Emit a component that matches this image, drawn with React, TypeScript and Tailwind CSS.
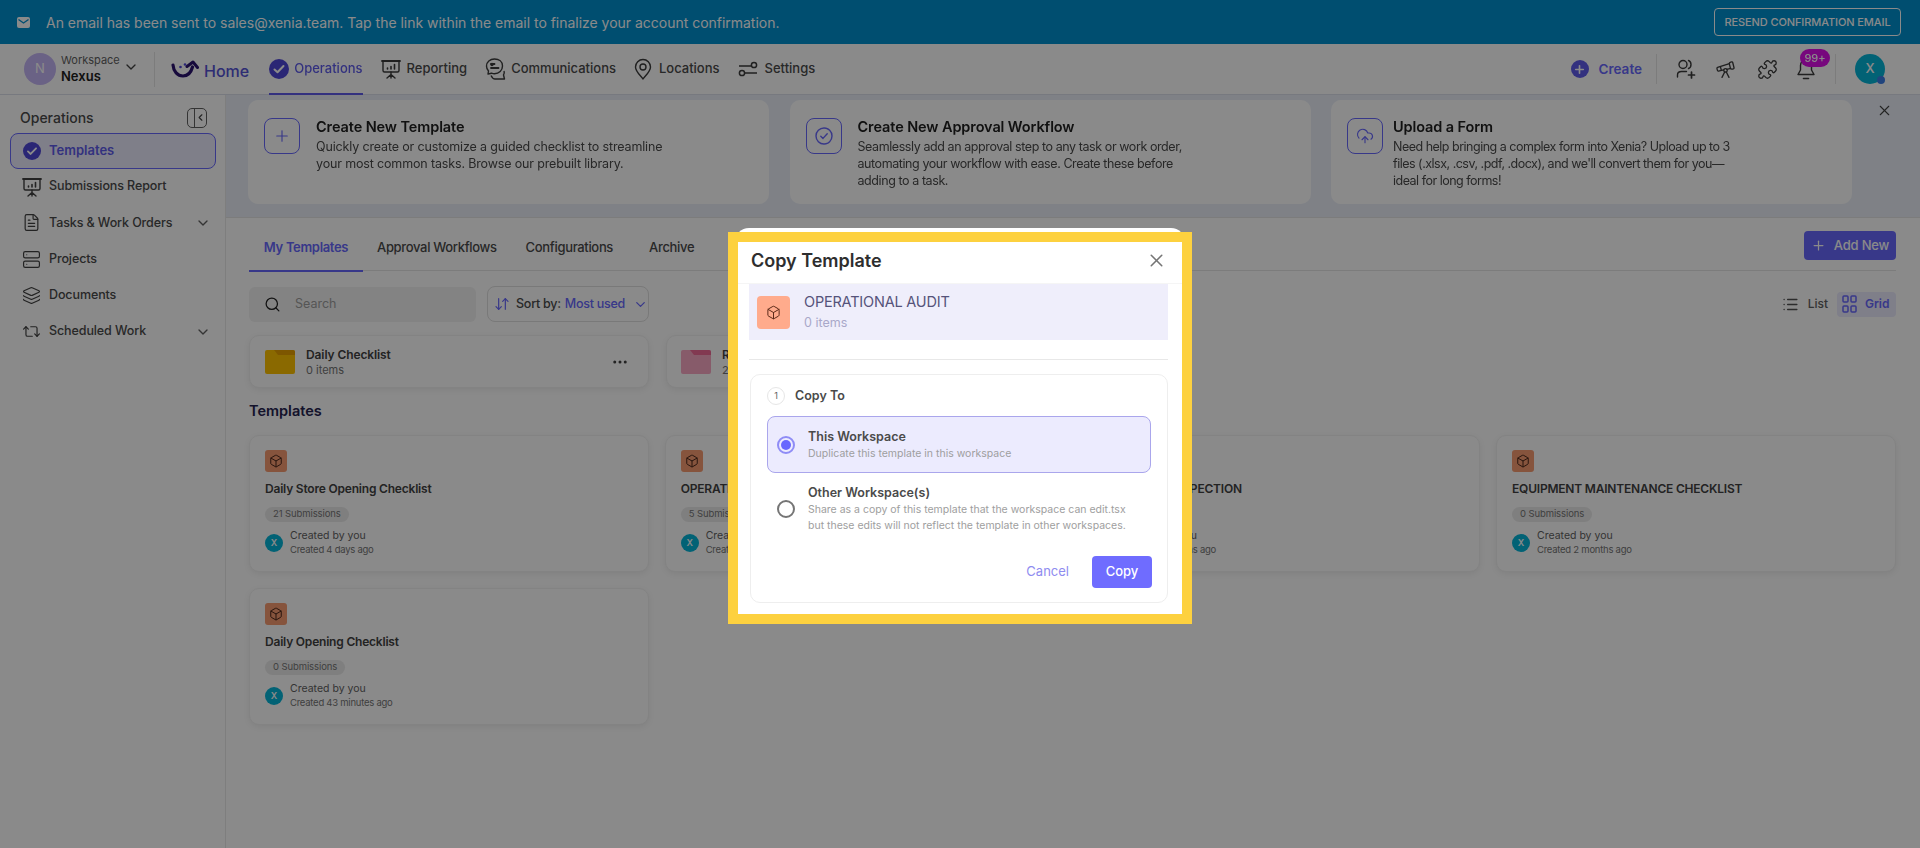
import {
  ArrowDownUp,
  Box,
  ChevronDown,
  ChevronLeft,
  CloudUpload,
  Ellipsis,
  FileText,
  Layers,
  List,
  Plus,
  Puzzle,
  Repeat2,
  Search,
  Server,
  Telescope,
  X,
} from "lucide-react";

function CheckBadge({ size = 20 }: { size?: number }) {
  return (
    <svg width={size} height={size} viewBox="0 0 20 20" className="shrink-0">
      <circle cx="10" cy="10" r="10" fill="#4f46d8" />
      <path d="M5.5 10.5l3 2.8 6-6.3" fill="none" stroke="#fff" strokeWidth="2" strokeLinecap="round" strokeLinejoin="round" />
    </svg>
  );
}

function Logo() {
  return (
    <svg width="28" height="18" viewBox="0 0 28 18" fill="none" className="shrink-0">
      <path d="M2 5c.5 6.500 4.500 11 10 11 5 0 8-3.500 9.500-9" stroke="#2c1470" strokeWidth="3.200" strokeLinecap="round" />
      <path d="M16 6.500L22 2l4.500 5.500" stroke="#2c1470" strokeWidth="3" strokeLinecap="round" strokeLinejoin="round" />
      <circle cx="9.500" cy="7" r="1.300" fill="#4f46d8" />
      <circle cx="14" cy="4.500" r="1.300" fill="#4f46d8" />
    </svg>
  );
}

function ReportIcon({ color = "#3b3b3b" }: { color?: string }) {
  return (
    <svg width="20" height="20" viewBox="0 0 20 20" fill="none" stroke={color} strokeWidth="1.400" strokeLinecap="round" className="shrink-0">
      <path d="M1 2h18" strokeWidth="1.800" />
      <path d="M2 2v9.500A1.500 1.500 0 0 0 3.500 13h13a1.500 1.500 0 0 0 1.500-1.500V2" />
      <path d="M6.500 10V9M10 10V7.500M13.500 10V5.500" strokeWidth="1.600" />
      <path d="M10 13v2.500M10 15.500L6 19M10 15.500l4 3.500M10 15.500V19" />
    </svg>
  );
}

function CommsIcon() {
  return (
    <svg width="22" height="22" viewBox="0 0 22 22" fill="none" stroke="#3b3b3b" strokeWidth="1.400" strokeLinejoin="round" className="shrink-0">
      <path d="M9.500 1C5 1 1.500 4 1.500 8c0 2.200.8 3.800 2 5l-.5 3 3.500-.8c1 .4 2 .6 3 .6 4.500 0 8-3.400 8-7.800S14 1 9.500 1z" />
      <path d="M6 6h3.500M6 10h7.500" strokeWidth="1.800" strokeLinecap="round" />
      <circle cx="7" cy="6.500" r="1" fill="#3b3b3b" />
      <path d="M6 17.500c1 2 2.500 3.500 4 3.500h9.500l-1-4c.8-1 1-2.500 .5-4" />
    </svg>
  );
}

function PinIcon() {
  return (
    <svg width="18" height="22" viewBox="0 0 18 22" fill="none" stroke="#3b3b3b" strokeWidth="1.400" strokeLinejoin="round" className="shrink-0">
      <path d="M9 21c-.8-1.800-7.500-7-7.500-12a7.500 7.500 0 0 1 15 0c0 5-6.700 10.200-7.500 12z" />
      <circle cx="9" cy="9" r="3" />
    </svg>
  );
}

function SlidersIcon() {
  return (
    <svg width="20" height="16" viewBox="0 0 20 16" fill="none" stroke="#3b3b3b" strokeWidth="1.500" className="shrink-0">
      <path d="M1 5h12M7 12h12" />
      <circle cx="16" cy="4" r="2.600" />
      <circle cx="4" cy="12" r="2.600" />
    </svg>
  );
}

function AddUserIcon() {
  return (
    <svg width="20" height="20" viewBox="0 0 20 20" fill="none" stroke="#3b3b3b" strokeWidth="1.400" strokeLinecap="round">
      <circle cx="7" cy="5.500" r="4" />
      <path d="M12.500 1.500c1.600.5 2.500 2 2.500 4s-.9 3.500-2.500 4" />
      <path d="M1.500 18v-2c0-2.400 2-3.500 4-3.500h5" />
      <path d="M15.500 13v6M12.500 16h6" strokeWidth="1.700" />
    </svg>
  );
}

function BellIcon() {
  return (
    <svg width="20" height="22" viewBox="0 0 20 22" fill="none" stroke="#3b3b3b" strokeWidth="1.400" strokeLinecap="round" strokeLinejoin="round">
      <path d="M10 2a5.500 5.500 0 0 0-5.500 5.500V12L2 16.500h16L15.500 12V7.500A5.500 5.500 0 0 0 10 2z" />
      <path d="M7.500 20.500h5" strokeWidth="1.600" />
    </svg>
  );
}

function Folder({ tab, body }: { tab: string; body: string }) {
  return (
    <svg width="30" height="24" viewBox="0 0 30 24" className="shrink-0">
      <rect width="30" height="24" rx="2" fill={body} />
      <path d="M9 0h19a2 2 0 0 1 2 2v3H13z" fill={tab} />
    </svg>
  );
}

function GridIcon() {
  return (
    <svg width="15" height="18" viewBox="0 0 15 18" fill="none" stroke="#6868fe" strokeWidth="1.500">
      <rect x="1" y="1" width="5" height="6" rx="1" />
      <rect x="9" y="1" width="5" height="6" rx="1" />
      <rect x="1" y="11" width="5" height="6" rx="1" />
      <rect x="9" y="11" width="5" height="6" rx="1" />
    </svg>
  );
}

function TopNav() {
  return (
    <div className="flex h-[51px] shrink-0 items-center border-b border-[#dde0ea] bg-white pl-6 pr-[35px]">
      <div className="flex h-8 w-8 items-center justify-center rounded-full bg-[#c5b5f5] text-[13px] text-white">N</div>
      <div className="ml-[5px] flex w-[62px] flex-col">
        <span className="text-[11px] leading-[14px] text-[#616161]">Workspace</span>
        <span className="text-[13px] font-semibold leading-[18px] text-[#212121]">Nexus</span>
      </div>
      <ChevronDown size={16} color="#424242" className="-mt-[4px]" />
      <div className="ml-[15px] h-[35px] w-px bg-[#e6e6e6]" />
      <div className="ml-[16px] flex items-center">
        <Logo />
        <span className="ml-[5px] mt-[3px] text-[16px] font-medium text-[#5553d6]">Home</span>
      </div>
      <div className="relative ml-[20px] flex h-[50px] items-center gap-[5px] text-[13px] font-medium text-[#5f5cea]">
        <CheckBadge />
        <span>Operations</span>
        <div className="absolute -bottom-px left-0 right-0 h-[2px] bg-[#5f5cea]" />
      </div>
      <div className="ml-[18px] flex items-center gap-[6px] text-[13px] font-medium text-[#4a4a4a]">
        <ReportIcon />
        <span>Reporting</span>
      </div>
      <div className="ml-[18px] flex items-center gap-[4px] text-[13px] font-medium text-[#4a4a4a]">
        <CommsIcon />
        <span>Communications</span>
      </div>
      <div className="ml-[18px] flex items-center gap-[7px] text-[13px] font-medium text-[#4a4a4a]">
        <PinIcon />
        <span>Locations</span>
      </div>
      <div className="ml-[18px] flex items-center gap-[7px] text-[13px] font-medium text-[#4a4a4a]">
        <SlidersIcon />
        <span>Settings</span>
      </div>

      <div className="ml-auto flex items-center gap-[10px]">
        <div className="flex h-[18px] w-[18px] items-center justify-center rounded-full bg-[#5f5cea]">
          <Plus size={13} color="#fff" strokeWidth={3} />
        </div>
        <span className="text-[13.5px] font-semibold text-[#6868fe]">Create</span>
      </div>
      <div className="ml-[14px] h-[30px] w-px bg-[#e6e6e6]" />
      <div className="ml-[19px]"><AddUserIcon /></div>
      <Telescope size={21} color="#3b3b3b" strokeWidth={1.5} className="ml-[19px]" />
      <Puzzle size={21} color="#3b3b3b" strokeWidth={1.5} className="ml-[21px]" />
      <div className="relative ml-[18px]">
        <BellIcon />
        <div className="absolute -right-[14px] -top-[9px] flex h-[18px] w-[30px] items-center justify-center rounded-full bg-[#dd10e8] text-[11px] font-medium text-white">99+</div>
      </div>
      <div className="ml-[19px] h-[30px] w-px bg-[#e6e6e6]" />
      <div className="relative ml-[19px] flex h-[30px] w-[30px] items-center justify-center rounded-full bg-[#05b5d8] text-[13px] font-medium text-white">
        X
        <div className="absolute bottom-0 right-0 h-2 w-2 rounded-full bg-[#3c7ee8]" />
      </div>
    </div>
  );
}

const sideItems = [
  { label: "Submissions Report", icon: <ReportIcon color="#424242" />, more: false },
  { label: "Tasks & Work Orders", icon: <FileText size={19} color="#424242" strokeWidth={1.5} />, more: true },
  { label: "Projects", icon: <Server size={19} color="#424242" strokeWidth={1.5} />, more: false },
  { label: "Documents", icon: <Layers size={19} color="#424242" strokeWidth={1.5} />, more: false },
  { label: "Scheduled Work", icon: <Repeat2 size={19} color="#424242" strokeWidth={1.5} />, more: true },
];

function Sidebar() {
  return (
    <div className="flex w-[226px] shrink-0 flex-col border-r border-[#e9e9e9] bg-white">
      <div className="flex h-[37.500px] items-center justify-between pl-5 pr-[18px] pt-[8px]">
        <span className="text-[14px] font-medium text-[#4a4a4a]">Operations</span>
        <div className="flex h-[20px] w-[20px] items-center justify-center rounded-[5px] border border-[#616161]">
          <div className="ml-[6px] flex h-full items-center border-l border-[#616161]">
            <ChevronLeft size={11} color="#424242" strokeWidth={2.500} />
          </div>
        </div>
      </div>
      <div className="ml-[10px] flex h-[36px] w-[206px] items-center gap-[8px] rounded-[8px] border border-[#6868fe] bg-[#ebeafd] pl-[12px] text-[13px] font-semibold text-[#5f5cea]">
        <CheckBadge size={18} />
        Templates
      </div>
      {sideItems.map((item) => (
        <div key={item.label} className="flex h-[36.300px] items-center pl-[22px] pr-[14px] text-[12.500px] font-medium tracking-[-0.1px] text-[#4a4a4a]">
          <span className="flex w-[27px] shrink-0">{item.icon}</span>
          <span>{item.label}</span>
          {item.more && <ChevronDown size={16} color="#616161" className="ml-auto" />}
        </div>
      ))}
    </div>
  );
}

function CheckBadgeOutline() {
  return (
    <svg width="20" height="20" viewBox="0 0 20 20" fill="none" stroke="#6868fe" strokeWidth="1.400">
      <circle cx="10" cy="10" r="8" />
      <path d="M6.800 10.200l2.200 2.200 4.200-4.600" strokeLinecap="round" strokeLinejoin="round" />
    </svg>
  );
}

const promos = [
  {
    title: "Create New Template",
    icon: <Plus size={18} color="#6868fe" strokeWidth={1.5} />,
    textClass: "ml-[16px]",
    descClass: "tracking-[-0.15px]",
    lines: ["Quickly create or customize a guided checklist to streamline", "your most common tasks. Browse our prebuilt library."],
  },
  {
    title: "Create New Approval Workflow",
    icon: <CheckBadgeOutline />,
    textClass: "ml-[16px]",
    descClass: "tracking-[-0.42px]",
    lines: ["Seamlessly add an approval step to any task or work order,", "automating your workflow with ease. Create these before", "adding to a task."],
  },
  {
    title: "Upload a Form",
    icon: <CloudUpload size={18} color="#6868fe" strokeWidth={1.5} />,
    textClass: "ml-[10px]",
    descClass: "tracking-[-0.5px]",
    lines: ["Need help bringing a complex form into Xenia? Upload up to 3", "files (.xlsx, .csv, .pdf, .docx), and we'll convert them for you—", "ideal for long forms!"],
  },
];

function PromoRow() {
  return (
    <div className="relative flex h-[123px] shrink-0 gap-[20.500px] border-b border-[#e6e6e6] bg-[#ebeff8] pl-[22px] pt-[5px]">
      {promos.map((p) => (
        <div key={p.title} className="flex h-[104px] w-[521px] rounded-[10px] bg-white pl-[16px] pt-[18px]">
          <div className="flex h-[36px] w-[36px] shrink-0 items-center justify-center rounded-[8px] border border-[#6868fe]">{p.icon}</div>
          <div className={p.textClass}>
            <div className="text-[14.500px] font-semibold leading-[18px] tracking-[-0.1px] text-[#212121]">{p.title}</div>
            <div className={`mt-[2px] text-[12.500px] leading-[17px] text-[#4a4a4a] ${p.descClass}`}>
              {p.lines.map((l) => <div key={l}>{l}</div>)}
            </div>
          </div>
        </div>
      ))}
      <X size={17} color="#424242" strokeWidth={1.5} className="absolute right-[27px] top-[7px]" />
    </div>
  );
}

const cards = [
  { title: "Daily Store Opening Checklist", subs: "21 Submissions", age: "Created 4 days ago" },
  { title: "OPERATIONAL AUDIT", subs: "5 Submissions", age: "Created 4 days ago" },
  { title: "MACHINERY INSPECTION", subs: "0 Submissions", age: "Created 2 months ago" },
  { title: "EQUIPMENT MAINTENANCE CHECKLIST", subs: "0 Submissions", age: "Created 2 months ago" },
  { title: "Daily Opening Checklist", subs: "0 Submissions", age: "Created 43 minutes ago" },
];

function TemplateCard({ title, subs, age }: { title: string; subs: string; age: string }) {
  return (
    <div className="h-[137px] rounded-[10px] border border-[#f2f2f2] bg-white pl-[15px] pt-[14px] shadow-[0_2px_6px_rgba(0,0,0,0.07)]">
      <div className="flex h-[22px] w-[22px] items-center justify-center rounded-[3px] bg-[#f79b71]">
        <Box size={14} color="#3d1f14" strokeWidth={1.6} />
      </div>
      <div className="mt-[8px] text-[12px] font-semibold leading-[18px] tracking-[-0.2px] text-[#424242]">{title}</div>
      <div className="mt-[9px] flex h-[15px] w-fit items-center rounded-full bg-[#ebebeb] px-[8px] text-[9.500px] tracking-[-0.1px] text-[#757575]">{subs}</div>
      <div className="mt-[7px] flex items-center gap-[7px]">
        <div className="flex h-[18px] w-[18px] items-center justify-center rounded-full bg-[#05b5d8] text-[9px] font-semibold text-white">X</div>
        <div>
          <div className="text-[10.500px] leading-[14px] text-[#616161]">Created by you</div>
          <div className="text-[9.500px] leading-[14px] tracking-[-0.25px] text-[#757575]">{age}</div>
        </div>
      </div>
    </div>
  );
}

function Templates() {
  return (
    <div className="flex-1 bg-white pl-[23px] pr-[24px]">
      <div className="flex h-[53px] items-start justify-between border-b border-[#e6e6e6]">
        <div className="flex h-[53px] items-center pt-[7px] text-[13px] font-medium tracking-[-0.33px] text-[#4a4a4a]">
          <div className="relative -mt-[7px] flex h-[53px] w-[114px] items-center justify-center pt-[7px] font-semibold text-[#6868fe]">
            My Templates
            <div className="absolute -bottom-px left-0 right-0 h-[2px] bg-[#6868fe]" />
          </div>
          <span className="ml-[14px]">Approval Workflows</span>
          <span className="ml-[29px]">Configurations</span>
          <span className="ml-[36px]">Archive</span>
        </div>
        <div className="mt-[13px] flex h-[29px] w-[92px] items-center justify-center gap-[8px] rounded-[4px] bg-[#6868fe] text-[13px] font-medium tracking-[-0.2px] text-white">
          <Plus size={15} color="#fff" strokeWidth={2} />
          Add New
        </div>
      </div>

      <div className="mt-[15px] flex h-[36px] items-center">
        <div className="flex h-[35px] w-[227px] items-center gap-[14px] rounded-[6px] bg-[#f2f2f2] pl-[15px] text-[12.500px] text-[#9e9e9e]">
          <Search size={17} color="#212121" strokeWidth={1.8} />
          Search
        </div>
        <div className="ml-[11px] flex h-[36px] w-[162px] items-center whitespace-nowrap rounded-[8px] border border-[#e0e0e0] pl-[6px] text-[12.500px] font-medium tracking-[-0.25px] text-[#4a4a4a]">
          <ArrowDownUp size={16} color="#6868fe" strokeWidth={1.8} className="shrink-0" />
          <span className="ml-[6px]">Sort by:</span>
          <span className="ml-[4px] text-[#6868fe]">Most used</span>
          <ChevronDown size={15} color="#6868fe" className="ml-[8px] shrink-0" />
        </div>
        <div className="ml-auto flex items-center gap-[9px] text-[12px] font-medium text-[#616161]">
          <List size={17} color="#525252" strokeWidth={2} />
          List
        </div>
        <div className="ml-[9px] flex h-[25px] w-[59px] items-center gap-[8px] rounded-[4px] bg-[#ebeafd] pl-[5px] text-[12px] font-semibold text-[#6868fe]">
          <GridIcon />
          Grid
        </div>
      </div>

      <div className="mt-[13px] flex gap-[17px]">
        <div className="flex h-[53px] w-[400px] items-center rounded-[10px] border border-[#f2f2f2] bg-white pl-[15px] pr-[19px] shadow-[0_2px_6px_rgba(0,0,0,0.07)]">
          <Folder tab="#e8a000" body="#ffc300" />
          <div className="ml-[11px] -mt-px">
            <div className="text-[12px] font-semibold leading-[17px] tracking-[-0.1px] text-[#424242]">Daily Checklist</div>
            <div className="text-[11px] leading-[14px] text-[#757575]">0 items</div>
          </div>
          <Ellipsis size={18} color="#424242" className="ml-auto" />
        </div>
        <div className="flex h-[53px] w-[400px] items-center rounded-[10px] border border-[#f2f2f2] bg-white pl-[14px] shadow-[0_2px_6px_rgba(0,0,0,0.07)]">
          <Folder tab="#f06a96" body="#f9a8c4" />
          <div className="ml-[11px] -mt-px">
            <div className="text-[12px] font-semibold leading-[17px] tracking-[-0.1px] text-[#424242]">Reports</div>
            <div className="text-[11px] leading-[14px] text-[#757575]">2 items</div>
          </div>
        </div>
      </div>

      <div className="mt-[14px] text-[14.500px] font-semibold leading-[18px] text-[#252350]">Templates</div>
      <div className="mt-[15px] grid grid-cols-4 gap-x-[15.670px] gap-y-[16px]">
        {cards.map((c) => <TemplateCard key={c.title} {...c} />)}
      </div>
    </div>
  );
}

function CopyDialog() {
  return (
    <div className="absolute left-[728px] top-[232px] h-[392px] w-[464px]">
      <div className="absolute -top-[4px] left-[7px] right-[7px] h-[40px] rounded-t-[14px] bg-white" />
      <div className="relative h-full border-[10px] border-[#fdd13f] bg-white">
        <div className="flex h-[42px] items-center justify-between border-b border-[#f5f5f5] pb-[4px] pl-[13px] pr-[15px]">
          <span className="text-[18px] font-semibold text-[#2e2e2e]">Copy Template</span>
          <X size={21} color="#757575" strokeWidth={1.8} />
        </div>
        <div className="ml-[11px] mr-[14px] flex h-[56px] items-center bg-[#efeefb] pl-[8px]">
          <div className="flex h-[33px] w-[33px] items-center justify-center rounded-[4px] bg-[#ffab8c]">
            <Box size={15} color="#5c2a18" strokeWidth={1.6} />
          </div>
          <div className="ml-[14px]">
            <div className="text-[14.500px] leading-[20px] tracking-[-0.2px] text-[#55537a]">OPERATIONAL AUDIT</div>
            <div className="mt-[2px] text-[12.500px] leading-[18px] text-[#a9a8c9]">0 items</div>
          </div>
        </div>
        <div className="ml-[11px] mr-[14px] mt-[19px] h-px bg-[#e8e8e8]" />
        <div className="ml-[12px] mr-[14px] mt-[14px] h-[229px] rounded-[10px] border border-[#eeeeee] px-[16px] pt-[11px]">
          <div className="flex h-[20px] items-center gap-[10px]">
            <div className="flex h-[18px] w-[18px] items-center justify-center rounded-full border border-[#e6e6e6] text-[9px] text-[#616161]">1</div>
            <span className="text-[12.500px] font-semibold text-[#4a4a4a]">Copy To</span>
          </div>
          <div className="mt-[10px] flex h-[57px] items-center rounded-[8px] border-[1.5px] border-[#aaa6ec] bg-[#ecebfe] pl-[9px]">
            <div className="flex h-[18px] w-[18px] items-center justify-center rounded-full border-2 border-[#8f8cf6]">
              <div className="h-[10px] w-[10px] rounded-full bg-[#6868fe]" />
            </div>
            <div className="ml-[13px]">
              <div className="text-[12.500px] font-semibold leading-[18px] text-[#4a4a4a]">This Workspace</div>
              <div className="text-[10.500px] leading-[15px] text-[#9e9e9e]">Duplicate this template in this workspace</div>
            </div>
          </div>
          <div className="mt-[11px] flex items-center pl-[10px]">
            <div className="h-[18px] w-[18px] rounded-full border-2 border-[#757575]" />
            <div className="ml-[13px]">
              <div className="text-[12.500px] font-semibold leading-[18px] text-[#4a4a4a]">Other Workspace(s)</div>
              <div className="text-[10.500px] leading-[16px] text-[#9e9e9e]">
                <div>Share as a copy of this template that the workspace can edit.tsx</div>
                <div>but these edits will not reflect the template in other workspaces.</div>
              </div>
            </div>
          </div>
          <div className="-mr-px mt-[22px] flex items-center justify-end">
            <span className="text-[13px] text-[#8f8cf0]">Cancel</span>
            <div className="ml-[23px] flex h-[32px] w-[60px] items-center justify-center rounded-[4px] bg-[#6f6cff] text-[13px] font-medium text-white">Copy</div>
          </div>
        </div>
      </div>
    </div>
  );
}

export default function App() {
  return (
    <div className="relative h-[848px] w-[1920px] overflow-hidden bg-white font-['Inter',sans-serif] blur-[0.4px]">
      <div className="flex h-full flex-col blur-[0.6px]">
        {/* Email banner */}
        <div className="flex h-[44px] shrink-0 items-center justify-between bg-[#0090d0] pl-[17px] pr-[19px]">
          <div className="flex items-center gap-[16px] text-[14px] tracking-[-0.02px] text-white">
            <svg width="13" height="11" viewBox="0 0 13 11">
              <rect width="13" height="11" rx="2" fill="#fff" />
              <path d="M1.500 2.500l5 3.500 5-3.500" fill="none" stroke="#0090d0" strokeWidth="1.300" />
            </svg>
            An email has been sent to sales@xenia.team. Tap the link within the email to finalize your account confirmation.
          </div>
          <div className="flex h-[28px] w-[187px] items-center justify-center rounded-[4px] border border-white text-[11px] font-medium tracking-[-0.1px] text-white">RESEND CONFIRMATION EMAIL</div>
        </div>
        <TopNav />
        <div className="flex min-h-0 flex-1">
          <Sidebar />
          <div className="flex min-w-0 flex-1 flex-col">
            <PromoRow />
            <Templates />
          </div>
        </div>
      </div>
      {/* Dim layer under the dialog */}
      <div className="absolute inset-0 bg-black/46" />
      <CopyDialog />
    </div>
  );
}
